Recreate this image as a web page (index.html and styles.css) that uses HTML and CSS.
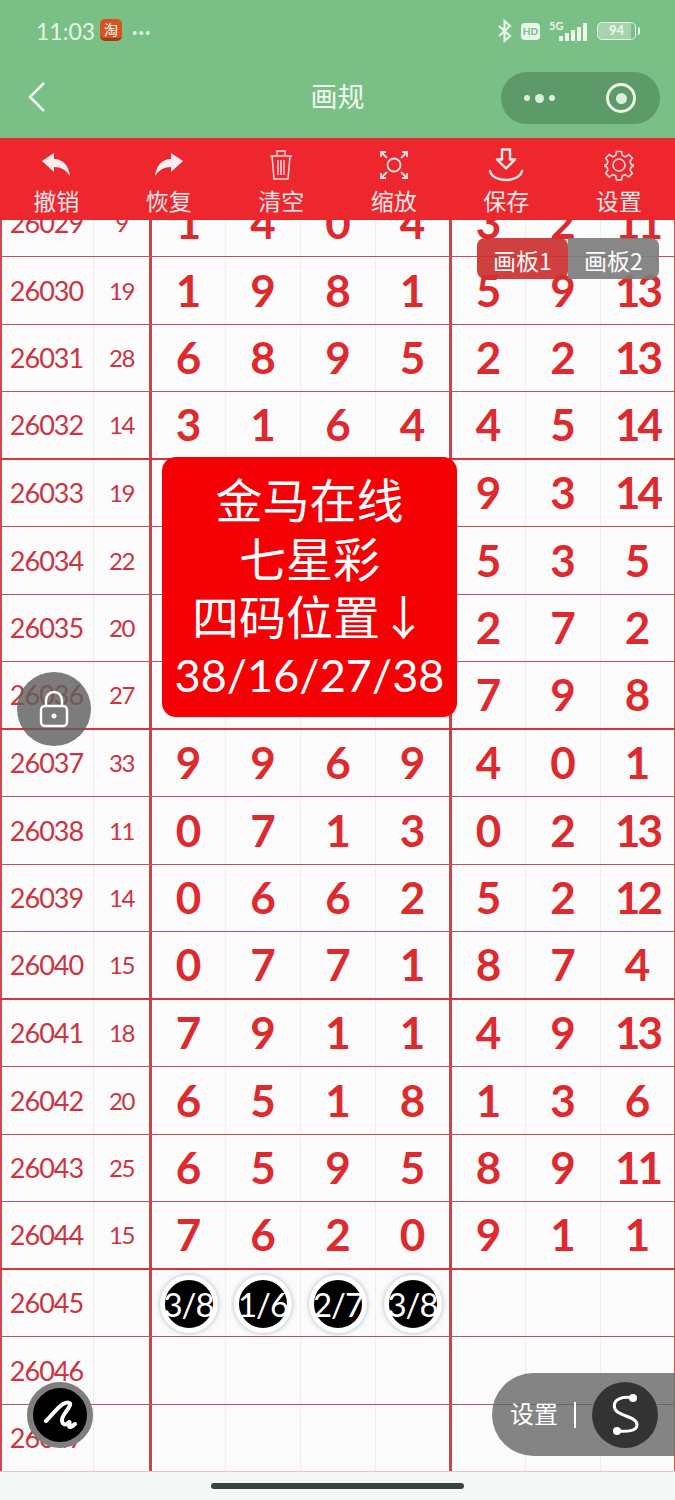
FILE: index.html
```html
<!DOCTYPE html>
<html lang="zh">
<head>
<meta charset="utf-8">
<title>画规</title>
<link rel="stylesheet" href="styles.css">
</head>
<body>
<div class="page">
  <header class="head">
    <div class="status">
      <div class="status-left">
        <span class="time">11:03</span>
        <span class="tao">淘</span>
        <span class="more">···</span>
      </div>
      <div class="status-right">
        <svg class="ic-bt" width="16" height="24" viewBox="0 0 16 24"><path d="M2 7l11 10-5.500 5V2L13 7 2 17" fill="none" stroke="#e6f5e8" stroke-width="2.200"/></svg>
        <span class="hd">HD</span>
        <span class="net"><span class="net-label">5G</span><svg width="30" height="18" viewBox="0 0 30 18"><rect x="0" y="13" width="4" height="5" fill="#eaf6ec"/><rect x="6" y="10" width="4" height="8" fill="#eaf6ec"/><rect x="12" y="7" width="4" height="11" fill="#eaf6ec"/><rect x="18" y="4" width="4" height="14" fill="#eaf6ec"/><rect x="24" y="0" width="4" height="18" fill="#eaf6ec"/></svg></span>
        <span class="batt"><span class="batt-body">94</span><span class="batt-tip"></span></span>
      </div>
    </div>
    <div class="nav">
      <svg class="back" width="20" height="32" viewBox="0 0 20 32"><path d="M17 2L3 16l14 14" fill="none" stroke="#eef8ef" stroke-width="2.600"/></svg>
      <div class="title">画规</div>
      <div class="capsule">
        <span class="dots"><i></i><b></b><i></i></span>
        <span class="target"><b></b></span>
      </div>
    </div>
  </header>

  <nav class="toolbar">
    <div class="tool">
      <svg width="30" height="28" viewBox="0 0 30 28"><path d="M1 10L13 2v6C22 8 28 15 29 25 25 19 20 16 13 16v5z" fill="#fdeeee"/></svg>
      <span>撤销</span>
    </div>
    <div class="tool">
      <svg width="30" height="28" viewBox="0 0 30 28"><path d="M29 10L17 2v6C8 8 2 15 1 25 5 19 10 16 17 16v5z" fill="#fdeeee"/></svg>
      <span>恢复</span>
    </div>
    <div class="tool">
      <svg width="24" height="32" viewBox="0 0 24 32" fill="none" stroke="#fbdcdc" stroke-width="1.500"><path d="M1 7h22M8 6V2h8v4M3 7l2 23h14l2-23M9 11v15M12 11v15M15 11v15"/></svg>
      <span>清空</span>
    </div>
    <div class="tool">
      <svg width="30" height="30" viewBox="0 0 30 30" fill="none" stroke="#fbe4e4" stroke-width="1.800"><circle cx="15" cy="15" r="6.500"/><path d="M2 7V2h5M2 2l6 6M28 7V2h-5M28 2l-6 6M2 23v5h5M2 28l6-6M28 23v5h-5M28 28l-6-6"/></svg>
      <span>缩放</span>
    </div>
    <div class="tool">
      <svg width="36" height="34" viewBox="0 0 36 34" fill="none" stroke="#fdeeee" stroke-width="2.400" stroke-linejoin="round" stroke-linecap="round"><path d="M14 1.500h8v10h5l-9 9-9-9h5z"/><path d="M2 23c3 12 29 12 32 0"/></svg>
      <span>保存</span>
    </div>
    <div class="tool">
      <svg width="30" height="30" viewBox="0 0 30 30" fill="none" stroke="#fbdcdc" stroke-width="1.600"><circle cx="15" cy="15" r="6"/><path d="M12.500 1.500h5l.8 4 3 1.300 3.500-2.300 3.500 3.500-2.300 3.500 1.300 3 4 .8v0l-4 1.600-1.300 3 2.300 3.500-3.500 3.500-3.500-2.300-3 1.300-.8 4h-5l-.8-4-3-1.300-3.500 2.300-3.500-3.500 2.300-3.500-1.300-3-3.500-1.200 3.500-1.200 1.300-3-2.300-3.500 3.500-3.500 3.500 2.300 3-1.300z"/></svg>
      <span>设置</span>
    </div>
  </nav>

  <main class="sheet">
    <div class="table">
      <div class="row"><div class="c-id">26029</div><div class="c-sum">9</div><div class="n first">1</div><div class="n">4</div><div class="n">0</div><div class="n">4</div><div class="n first">3</div><div class="n">2</div><div class="n tight">11</div></div>
      <div class="row"><div class="c-id">26030</div><div class="c-sum">19</div><div class="n first">1</div><div class="n">9</div><div class="n">8</div><div class="n">1</div><div class="n first">5</div><div class="n">9</div><div class="n tight">13</div></div>
      <div class="row"><div class="c-id">26031</div><div class="c-sum">28</div><div class="n first">6</div><div class="n">8</div><div class="n">9</div><div class="n">5</div><div class="n first">2</div><div class="n">2</div><div class="n tight">13</div></div>
      <div class="row thick"><div class="c-id">26032</div><div class="c-sum">14</div><div class="n first">3</div><div class="n">1</div><div class="n">6</div><div class="n">4</div><div class="n first">4</div><div class="n">5</div><div class="n tight">14</div></div>

      <div class="row"><div class="c-id">26033</div><div class="c-sum">19</div><div class="n first"></div><div class="n"></div><div class="n"></div><div class="n"></div><div class="n first">9</div><div class="n">3</div><div class="n tight">14</div></div>
      <div class="row"><div class="c-id">26034</div><div class="c-sum">22</div><div class="n first"></div><div class="n"></div><div class="n"></div><div class="n"></div><div class="n first">5</div><div class="n">3</div><div class="n">5</div></div>
      <div class="row"><div class="c-id">26035</div><div class="c-sum">20</div><div class="n first"></div><div class="n"></div><div class="n"></div><div class="n"></div><div class="n first">2</div><div class="n">7</div><div class="n">2</div></div>
      <div class="row thick"><div class="c-id">26036</div><div class="c-sum">27</div><div class="n first"></div><div class="n"></div><div class="n"></div><div class="n"></div><div class="n first">7</div><div class="n">9</div><div class="n">8</div></div>

      <div class="row"><div class="c-id">26037</div><div class="c-sum">33</div><div class="n first">9</div><div class="n">9</div><div class="n">6</div><div class="n">9</div><div class="n first">4</div><div class="n">0</div><div class="n">1</div></div>
      <div class="row"><div class="c-id">26038</div><div class="c-sum">11</div><div class="n first">0</div><div class="n">7</div><div class="n">1</div><div class="n">3</div><div class="n first">0</div><div class="n">2</div><div class="n tight">13</div></div>
      <div class="row"><div class="c-id">26039</div><div class="c-sum">14</div><div class="n first">0</div><div class="n">6</div><div class="n">6</div><div class="n">2</div><div class="n first">5</div><div class="n">2</div><div class="n tight">12</div></div>
      <div class="row thick"><div class="c-id">26040</div><div class="c-sum">15</div><div class="n first">0</div><div class="n">7</div><div class="n">7</div><div class="n">1</div><div class="n first">8</div><div class="n">7</div><div class="n">4</div></div>

      <div class="row"><div class="c-id">26041</div><div class="c-sum">18</div><div class="n first">7</div><div class="n">9</div><div class="n">1</div><div class="n">1</div><div class="n first">4</div><div class="n">9</div><div class="n tight">13</div></div>
      <div class="row"><div class="c-id">26042</div><div class="c-sum">20</div><div class="n first">6</div><div class="n">5</div><div class="n">1</div><div class="n">8</div><div class="n first">1</div><div class="n">3</div><div class="n">6</div></div>
      <div class="row"><div class="c-id">26043</div><div class="c-sum">25</div><div class="n first">6</div><div class="n">5</div><div class="n">9</div><div class="n">5</div><div class="n first">8</div><div class="n">9</div><div class="n tight">11</div></div>
      <div class="row thick"><div class="c-id">26044</div><div class="c-sum">15</div><div class="n first">7</div><div class="n">6</div><div class="n">2</div><div class="n">0</div><div class="n first">9</div><div class="n">1</div><div class="n">1</div></div>

      <div class="row"><div class="c-id">26045</div><div class="c-sum"></div><div class="n first"><span class="ball">3/8</span></div><div class="n"><span class="ball">1/6</span></div><div class="n"><span class="ball">2/7</span></div><div class="n"><span class="ball">3/8</span></div><div class="n first"></div><div class="n"></div><div class="n"></div></div>
      <div class="row"><div class="c-id">26046</div><div class="c-sum"></div><div class="n first"></div><div class="n"></div><div class="n"></div><div class="n"></div><div class="n first"></div><div class="n"></div><div class="n"></div></div>
      <div class="row"><div class="c-id">26047</div><div class="c-sum"></div><div class="n first"></div><div class="n"></div><div class="n"></div><div class="n"></div><div class="n first"></div><div class="n"></div><div class="n"></div></div>
    </div>
  </main>

  <footer class="home"><span class="home-bar"></span></footer>

  <div class="boards">
    <span class="board on">画板1</span>
    <span class="board">画板2</span>
  </div>

  <div class="notice">
    <div>金马在线</div>
    <div>七星彩</div>
    <div>四码位置↓</div>
    <div class="notice-num">38/16/27/38</div>
  </div>

  <div class="lock">
    <svg width="30" height="38" viewBox="0 0 30 38" fill="none" stroke="#fff" stroke-width="2.400"><path d="M7 16V10a8 8 0 0 1 16 0v6"/><rect x="2" y="16" width="26" height="20" rx="4"/><circle cx="15" cy="26" r="2.500" fill="#fff" stroke="none"/></svg>
  </div>

  <div class="pen">
    <svg width="34" height="30" viewBox="0 0 34 30" fill="none" stroke="#fff" stroke-width="4" stroke-linecap="round" stroke-linejoin="round"><path d="M3 21C9 15 15 7 20 4c4-2 8-2 7 1-1 4-8 10-8 15 0 4 3 6 6 3 2-2 2-1 1 3 0 2 3 1 6-2"/></svg>
  </div>

  <div class="dock">
    <span class="dock-label">设置</span>
    <span class="dock-sep"></span>
    <span class="dock-s">
      <svg width="36" height="44" viewBox="0 0 36 44" fill="none" stroke="#fff" stroke-width="3"><path d="M26 5C16 3 7 6 7.300 13 7.300 24 30 22 30 32 30 38 20 39 10 38"/><circle cx="26" cy="5" r="4" fill="#fff" stroke="none"/><circle cx="10" cy="38" r="4" fill="#fff" stroke="none"/></svg>
    </span>
  </div>
</div>
</body>
</html>
```

FILE: styles.css
```css
* { box-sizing: border-box; }
html, body { margin: 0; padding: 0; }
body { font-family: "Lato", "Noto Sans CJK SC", sans-serif; background: #f6f7f7; }

.page {
  position: relative;
  width: 675px;
  height: 1500px;
  overflow: hidden;
  display: flex;
  flex-direction: column;
}

/* header */
.head { height: 138px; background: #7abf85; flex: none; display: flex; flex-direction: column; }
.status { height: 62px; padding: 0 35px 0 36px; display: flex; justify-content: space-between; align-items: center; }
.status-left, .status-right { display: flex; align-items: center; }
.time { font-size: 23px; color: #e3f5e6; width: 64px; }
.tao {
  width: 22px; height: 22px; border-radius: 5px; margin-top: -2px;
  background: #d9531e; color: #fff; font-size: 14px; line-height: 20px; text-align: center;
  font-family: "Noto Sans CJK SC", sans-serif;
  border-bottom: 3px solid #a33a14;
}
.more { color: #e3f5e6; font-size: 20px; margin-left: 10px; line-height: 20px; font-weight: 700; letter-spacing: 1px; }
.ic-bt { margin-right: 8px; }
.hd {
  width: 19px; height: 17px; border-radius: 4px; background: #e8f6ea; color: #7abf85;
  font-size: 10px; font-weight: 900; text-align: center; line-height: 17px; margin-right: 9px;
}
.net { position: relative; display: flex; align-items: flex-end; height: 20px; padding-left: 10px; margin-right: 8px; }
.net-label { position: absolute; left: 0; top: -2px; font-size: 11px; font-weight: 700; color: #eaf6ec; }
.net svg { display: block; }
.batt { display: flex; align-items: center; }
.batt-body {
  width: 39px; height: 18px; border: 1.500px solid #e6f5e8; border-radius: 5px;
  font-size: 13px; font-weight: 900; line-height: 15px; text-align: center; color: #e6f5e8;
  background: linear-gradient(90deg, #a5d3ac 0 88%, transparent 88%);
}
.batt-tip { width: 2px; height: 8px; background: #e6f5e8; margin-left: 2px; border-radius: 0 2px 2px 0; }

.nav { position: relative; height: 76px; display: flex; align-items: center; justify-content: space-between; padding: 0 15px 4px 27px; }
.back { margin-bottom: 2px; }
.title {
  position: absolute; left: 0; right: 0; top: 16px; text-align: center;
  font-size: 27px; line-height: 36px; color: #f0f9f1;
  font-family: "Noto Sans CJK SC", sans-serif;
}
.capsule {
  position: relative; width: 159px; height: 52px; border-radius: 26px; background: #5c9a68;
  display: flex; align-items: center; justify-content: space-between; padding: 0 24px 0 23px;
}
.dots { display: flex; align-items: center; gap: 5px; }
.dots i { width: 6px; height: 6px; border-radius: 50%; background: #dcefdf; }
.dots b { width: 9px; height: 9px; border-radius: 50%; background: #dcefdf; }
.target {
  width: 30px; height: 30px; border-radius: 50%; border: 3px solid #e8f5ea;
  display: flex; align-items: center; justify-content: center;
}
.target b { width: 11px; height: 11px; border-radius: 50%; background: #dcefdf; }

/* toolbar */
.toolbar {
  height: 82px; flex: none; background: #ee262e;
  display: grid; grid-template-columns: repeat(6, 1fr);
  position: relative; z-index: 2;
}
.tool {
  display: flex; flex-direction: column; align-items: center;
  color: #fde9e9; font-family: "Noto Sans CJK SC", sans-serif;
}
.tool svg { height: 34px; margin-top: 10px; display: block; }
.tool span { font-size: 23px; line-height: 32px; margin-top: 2px; }

/* table */
.sheet { height: 1252px; flex: none; overflow: hidden; background: #fbfbfc; }
.table { margin-top: -30.500px; }
.row {
  height: 67.500px;
  display: grid;
  grid-template-columns: 94px 55px 76px 75px 75px 74px 76px 75px 75px;
  border-bottom: 1px solid #b9545c;
}
.row.thick { border-bottom: 2px solid #d9323a; }
.row:last-child { border-bottom-color: #e6c4c9; }
.row > div { display: flex; align-items: center; justify-content: center; }
.c-id {
  font-size: 27px; letter-spacing: -1px; color: #cb3441; padding-right: 2px;
  border-left: 2px solid #cc4a50; border-right: 1px solid #ececee;
}
.c-sum { font-size: 24px; letter-spacing: -1.500px; color: #cb3441; }
.n {
  font-size: 44px; font-weight: 700; color: #dc2a2e; padding-bottom: 1px;
  border-left: 1px solid #eeeef0;
}
.n.tight { letter-spacing: -3px; }
.n.first { border-left: 3px solid #c7444b; }
.row > .n:nth-child(9) { border-right: 1px solid #d8535a; }

.ball {
  width: 58px; height: 58px; border-radius: 50%; flex: none; margin-top: 3px;
  background: #000; border: 5.500px solid #fff; box-shadow: 0 0 5px rgba(120, 140, 135, .6);
  display: flex; align-items: center; justify-content: center;
  color: #fff; font-size: 33px; font-weight: 400; letter-spacing: -1px; white-space: nowrap;
}

/* bottom */
.home { flex: 1; background: #f6f7f7; display: flex; justify-content: center; padding-top: 11px; }
.home-bar { width: 253px; height: 6px; border-radius: 3px; background: #39443f; }

/* overlays */
.boards { position: absolute; left: 477px; top: 238px; display: flex; width: 182px; height: 41px; z-index: 1; }
.board {
  flex: 1; background: rgba(125, 125, 125, .92); color: #fdfdfd;
  font-size: 23px; line-height: 45px; text-align: center;
  border-radius: 0 8px 8px 0;
  font-family: "Noto Sans CJK SC", sans-serif;
}
.board.on { background: rgba(205, 50, 50, .93); border-radius: 8px; }

.notice {
  position: absolute; left: 162px; top: 457px; width: 295px; height: 260px;
  background: #f40005; border-radius: 14px; color: #fff;
  font-size: 47px; line-height: 58.500px; text-align: center; padding-top: 12px;
  font-family: "Noto Sans CJK SC", sans-serif;
}
.notice-num { font-family: "Lato", sans-serif; white-space: nowrap; font-size: 45px; padding-top: 1px; }

.lock {
  position: absolute; left: 17px; top: 672px; width: 74px; height: 74px; border-radius: 50%;
  background: rgba(95, 95, 95, .82);
  display: flex; align-items: center; justify-content: center;
}
.pen {
  position: absolute; left: 27px; top: 1382px; width: 66px; height: 66px; border-radius: 50%;
  background: #000; border: 6px solid #7e7e7e;
  display: flex; align-items: center; justify-content: center;
}
.dock {
  position: absolute; left: 492px; top: 1373px; width: 183px; height: 83px;
  border-radius: 42px 0 0 42px; background: rgba(105, 105, 105, .82);
  display: flex; align-items: center; padding-left: 18px;
  font-family: "Noto Sans CJK SC", sans-serif;
}
.dock-label { color: #fff; font-size: 24px; line-height: 30px; margin-bottom: 3px; }
.dock-sep { width: 2px; height: 26px; background: #fff; margin-left: 16px; }
.dock-s {
  width: 66px; height: 66px; border-radius: 50%; background: #333;
  margin-left: 16px; display: flex; align-items: center; justify-content: center;
}
```
